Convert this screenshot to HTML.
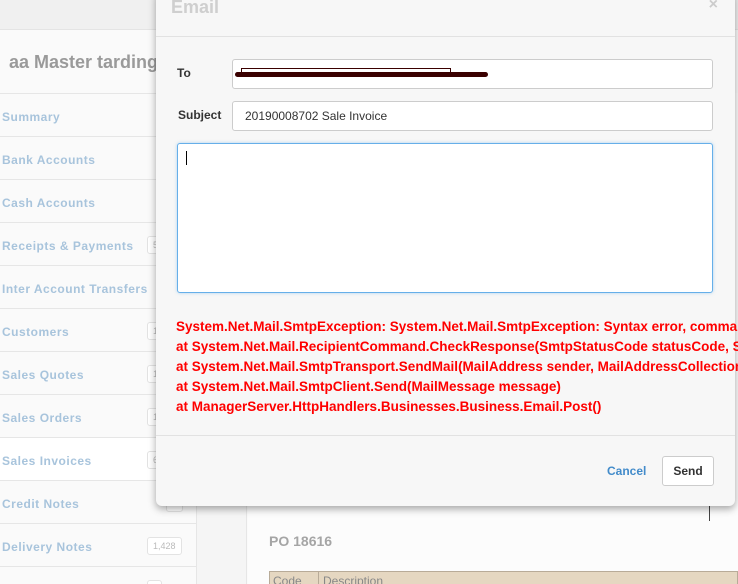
<!DOCTYPE html>
<html style="overflow:hidden;width:738px;height:584px"><head><style>
*{box-sizing:border-box;margin:0;padding:0}
body{width:738px;height:584px;overflow:hidden;position:relative;background:#fafafa;font-family:"Liberation Sans",Arial,sans-serif}
.top{position:absolute;left:0;top:0;width:738px;height:30px;background:#f0f0f0;border-bottom:1px solid #e4e4e4}
.title{position:absolute;left:9px;top:52px;font-size:18px;font-weight:bold;color:#9a9a9a}
.sb{position:absolute;left:0;top:93px;width:197px;border-right:1px solid #e6e6e6;height:491px;background:#fafafa;overflow:hidden}
.it{height:43px;border-top:1px solid #e6e6e6;font-size:12px;letter-spacing:0.5px;font-weight:bold;color:#a8c4dc;padding:16px 0 0 2px;position:relative}
.bd{position:absolute;left:147px;top:13px;border:1px solid #e3e3e3;border-radius:3px;background:#fff;font-size:9px;letter-spacing:0;color:#bbb;padding:3px 5px;font-weight:normal}
.strip{position:absolute;left:197px;top:93px;width:50px;height:491px;background:#f5f5f5;border-right:1px solid #e6e6e6}
.content{position:absolute;left:248px;top:93px;width:490px;height:491px;background:#fcfcfc}
.po{position:absolute;left:269px;top:533px;font-size:14px;font-weight:bold;color:#a5a5a5}
.tbl{position:absolute;left:269px;top:571px;width:469px;height:13px;background:#e5d7c1;border:1px solid #b8ab98;border-bottom:none;font-size:12px;color:#888;overflow:hidden}
.modal{position:absolute;left:156px;top:-10px;width:579px;height:516px;background:#f7f7f7;border-radius:6px;box-shadow:0 3px 8px rgba(0,0,0,.35)}
.mh{height:47px;border-bottom:1px solid #e2e2e2;position:relative}
.mh span{position:absolute;left:15px;top:7px;font-size:18px;font-weight:bold;color:#cfcfcf}
.mh i{position:absolute;right:17px;top:6px;font-style:normal;font-size:16px;color:#ccc;font-weight:bold}
.lbl{position:absolute;font-size:12px;font-weight:bold;color:#333}
.inp{position:absolute;left:76px;width:481px;height:30px;background:#fff;border:1px solid #ccc;border-radius:3px;font-size:12px;color:#333;padding:7px 12px}
.ta{position:absolute;left:21px;top:153px;width:536px;height:150px;background:#fff;border:1px solid #66afe9;border-radius:3px;box-shadow:0 0 3px rgba(102,175,233,.5)}
.errwrap{position:absolute;left:20px;top:327px;width:562px;height:100px;overflow:hidden}
.err{font-size:13.5px;font-weight:bold;color:#f00;line-height:20px;white-space:nowrap}
.ft{position:absolute;left:0;top:445px;width:579px;border-top:1px solid #e2e2e2;height:71px}
.cancel{position:absolute;left:451px;top:28px;font-size:12px;font-weight:bold;color:#428bca}
.send{position:absolute;left:506px;top:20px;width:52px;height:30px;border:1px solid #ccc;border-radius:3px;background:#fff;font-size:12px;font-weight:bold;color:#333;text-align:center;line-height:28px}
</style></head><body>
<div class="top"></div>
<div class="title">aa Master tarding</div>
<div class="sb">
<div class="it">Summary</div>
<div class="it">Bank Accounts</div>
<div class="it">Cash Accounts</div>
<div class="it">Receipts &amp; Payments<span class="bd">5</span></div>
<div class="it">Inter Account Transfers</div>
<div class="it">Customers<span class="bd">1</span></div>
<div class="it">Sales Quotes<span class="bd">1</span></div>
<div class="it">Sales Orders<span class="bd">1</span></div>
<div class="it" style="background:#fff">Sales Invoices<span class="bd">6</span></div>
<div class="it">Credit Notes<span class="bd" style="left:166px">2</span></div>
<div class="it">Delivery Notes<span class="bd">1,428</span></div>
<div class="it"><span class="bd">&nbsp;</span></div>
</div>
<div class="strip"></div>
<div class="content"></div>
<div style="position:absolute;left:709px;top:505px;width:1px;height:16px;background:#444"></div>
<div class="po">PO 18616</div>
<div class="tbl"><span style="position:absolute;left:3px;top:2px">Code</span><span style="position:absolute;left:48px;top:0;height:22px;border-left:1px solid #b8ab98"></span><span style="position:absolute;left:53px;top:2px">Description</span></div>
<div class="modal">
<div class="mh"><span>Email</span><i>×</i></div>
<div class="lbl" style="left:21px;top:76px">To</div>
<div class="inp" style="top:69px"><div style="position:absolute;left:8px;top:8px;width:210px;height:6px;border:1.5px solid #3a0000"></div><div style="position:absolute;left:2px;top:12px;width:253px;height:5px;background:#3a0000;border-radius:3px"></div></div>
<div class="lbl" style="left:22px;top:118px">Subject</div>
<div class="inp" style="top:111px">20190008702 Sale Invoice</div>
<div class="ta"><div style="position:absolute;left:8px;top:7px;width:1px;height:14px;background:#000"></div></div>
<div class="errwrap"><div class="err">System.Net.Mail.SmtpException: System.Net.Mail.SmtpException: Syntax error, command unrecognized<br>at System.Net.Mail.RecipientCommand.CheckResponse(SmtpStatusCode statusCode, String response)<br>at System.Net.Mail.SmtpTransport.SendMail(MailAddress sender, MailAddressCollection recipients)<br>at System.Net.Mail.SmtpClient.Send(MailMessage message)<br>at ManagerServer.HttpHandlers.Businesses.Business.Email.Post()</div></div>
<div class="ft"><span class="cancel">Cancel</span><div class="send">Send</div></div>
</div>
</body></html>
